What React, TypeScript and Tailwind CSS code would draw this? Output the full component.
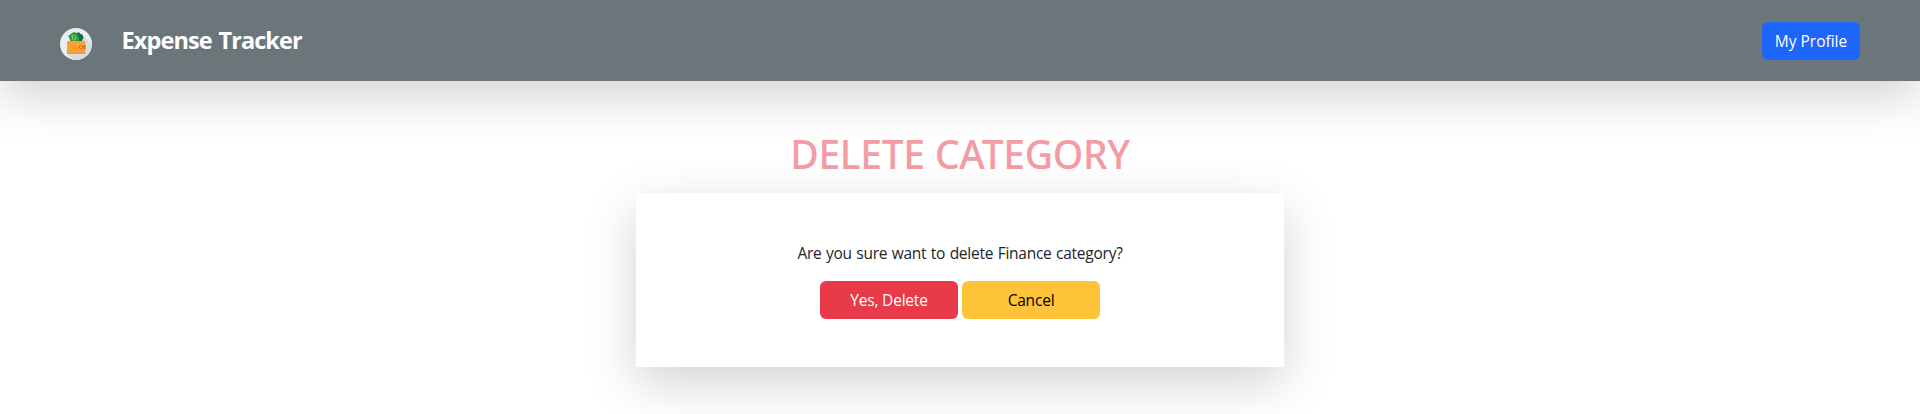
function WalletLogo() {
  return (
    <svg viewBox="0 0 32 32" className="h-8 w-8 shrink-0" aria-hidden="true">
      <defs>
        <clipPath id="disc"><circle cx="16" cy="16" r="16" /></clipPath>
      </defs>
      <g clipPath="url(#disc)">
        <rect width="32" height="32" fill="#e9eff1" />
        <path d="M23 7 L32 16 V32 H13 L7 26 Z" fill="#d5dfe1" />
        <path d="M12 5 L14.500 4.300 L16 5 L19 4.200 L20.500 6 L22.500 6.500 L23.500 9.500 L21.800 13.500 H12 Z" fill="#10713a" />
        <path d="M8 7.500 L10 7 L11 5.300 L14 5.800 L17 4.800 L18 8 L19.500 10 L19 13.500 H10.500 L9.500 10.500 Z" fill="#2a9c48" />
        <ellipse cx="14" cy="9.500" rx="2.400" ry="3" transform="rotate(-12 14 9.500)" fill="#86c94f" />
        <path d="M15 8.100 Q13.300 7.600 13.300 9 Q15 9.400 14.900 10.600 Q14.200 11.600 13.100 10.900" fill="none" stroke="#1c7c39" strokeWidth="0.9" />
        <rect x="7" y="13" width="18.300" height="13" rx="0.8" fill="#fba12f" />
        <path d="M7 25 H25.300 V25.300 Q25.300 26 24.500 26 H8 Q7 26 7 25" fill="#f0932a" />
        <path d="M20.500 17.300 H25.600 V21.300 H20.500 Q18.700 21 18.700 19.300 Q18.700 17.600 20.500 17.300" fill="#d9772b" />
        <circle cx="21" cy="19.300" r="1" fill="#f5bd82" />
      </g>
    </svg>
  );
}

export default function App() {
  return (
    <div className="h-[414px] overflow-hidden bg-white font-['Open_Sans','Noto_Sans',sans-serif] text-[15.5px] leading-6 text-[#212529]">
      <header className="flex h-[81px] items-center bg-[#6b767b] px-[60px] shadow-[0_16px_48px_rgba(0,0,0,0.175)]">
        <div className="mt-[7px] flex"><WalletLogo /></div>
        <span className="-mt-px ml-[29.5px] whitespace-nowrap text-[23.5px] font-bold tracking-[-0.9px] [word-spacing:1.5px] text-white">Expense Tracker</span>
        <button className="ml-auto h-[38px] w-[98px] whitespace-nowrap rounded-md bg-[#1e66fb] text-white">My Profile</button>
      </header>
      <main className="flex flex-col items-center pt-[49px]">
        <h1 className="h-[63px] whitespace-nowrap font-['Noto_Sans',sans-serif] text-[39px] font-medium leading-[48px] tracking-[-0.35px] [word-spacing:0.5px] text-[#f49ca4]">DELETE CATEGORY</h1>
        <section className="flex h-[174px] w-[648px] flex-col items-center bg-white pt-12 shadow-[0_16px_48px_rgba(0,0,0,0.175)]">
          <p className="mb-4 whitespace-nowrap tracking-[-0.25px] [word-spacing:0.7px]">Are you sure want to delete Finance category?</p>
          <div className="flex gap-1">
            <button className="h-[38px] w-[138px] rounded-md bg-[#e83a49] tracking-[-0.2px] text-white">Yes, Delete</button>
            <button className="h-[38px] w-[138px] rounded-md bg-[#fec338] tracking-[-0.2px] text-black">Cancel</button>
          </div>
        </section>
      </main>
    </div>
  );
}
